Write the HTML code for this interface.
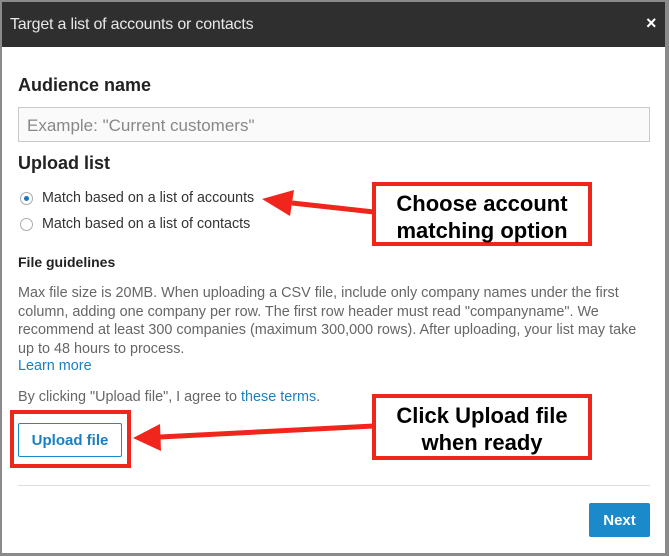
<!DOCTYPE html>
<html><head><meta charset="utf-8"><style>
*{margin:0;padding:0;box-sizing:border-box}
body{width:669px;height:556px;overflow:hidden;background:#8a8a8a;font-family:"Liberation Sans",sans-serif;position:relative}
.modal{position:absolute;left:2px;top:2px;width:663px;height:551px;background:#fff}
.hdr{position:absolute;left:0;top:0;width:663px;height:45px;background:#2f2f2f}
.t{position:absolute;white-space:nowrap}
.red{position:absolute;border:4px solid #f0261c;background:#fff}
.ann{position:absolute;font-weight:bold;font-size:22px;color:#000;text-align:center;line-height:27px;width:100%}
</style></head><body>
<div class="modal">
<div class="hdr"></div>
</div>
<div class="t" style="left:10px;top:16px;font-size:16px;color:#e8e8e8;letter-spacing:-0.2px">Target a list of accounts or contacts</div>
<div class="t" style="left:646px;top:13px;font-size:18px;color:#fff;font-weight:bold">×</div>
<div class="t" style="left:18px;top:75px;font-size:18px;font-weight:bold;color:#222">Audience name</div>
<div style="position:absolute;left:18px;top:107px;width:632px;height:35px;border:1px solid #c8c8c8;background:#fafafa"></div>
<div class="t" style="left:27px;top:116px;font-size:17px;color:#888">Example: "Current customers"</div>
<div class="t" style="left:18px;top:153px;font-size:18px;font-weight:bold;color:#222">Upload list</div>
<div style="position:absolute;left:20px;top:192px;width:13px;height:13px;border:1px solid #aaa;border-radius:50%;background:#fff"></div>
<div style="position:absolute;left:24px;top:196px;width:5px;height:5px;border-radius:50%;background:#1677c4"></div>
<div class="t" style="left:42px;top:190px;font-size:14.3px;color:#333">Match based on a list of accounts</div>
<div style="position:absolute;left:20px;top:218px;width:13px;height:13px;border:1px solid #aaa;border-radius:50%;background:#fff"></div>
<div class="t" style="left:42px;top:216px;font-size:14.3px;color:#333">Match based on a list of contacts</div>
<div class="t" style="left:18px;top:254px;font-size:14px;font-weight:bold;color:#222">File guidelines</div>
<div class="t" style="left:18px;top:284px;font-size:14.4px;line-height:18.5px;color:#666">Max file size is 20MB. When uploading a CSV file, include only company names under the first<br>column, adding one company per row. The first row header must read "companyname". We<br>recommend at least 300 companies (maximum 300,000 rows). After uploading, your list may take<br>up to 48 hours to process.</div>
<div class="t" style="left:18px;top:358px;font-size:14.4px;color:#1a7fc1">Learn more</div>
<div class="t" style="left:18px;top:389px;font-size:14.4px;color:#666">By clicking "Upload file", I agree to <span style="color:#1a7fc1">these terms</span>.</div>
<div style="position:absolute;left:10px;top:410px;width:121px;height:58px;border:4px solid #f0261c"></div>
<div style="position:absolute;left:18px;top:423px;width:104px;height:34px;border:1px solid #1a8acb;border-radius:2px;background:#fff"></div>
<div class="t" style="left:18px;top:432px;width:104px;text-align:center;font-size:15px;font-weight:bold;color:#1a7fc1">Upload file</div>
<div style="position:absolute;left:18px;top:485px;width:632px;height:1px;background:#ddd"></div>
<div style="position:absolute;left:589px;top:503px;width:61px;height:34px;background:#1a8acb;border-radius:2px"></div>
<div class="t" style="left:589px;top:512px;width:61px;text-align:center;font-size:15px;font-weight:bold;color:#fff">Next</div>
<svg style="position:absolute;left:0;top:0" width="669" height="556">
<line x1="374" y1="212" x2="292" y2="203" stroke="#f0261c" stroke-width="5"/>
<polygon points="262,199 294,190 290,216" fill="#f0261c"/>
<line x1="374" y1="426" x2="160" y2="437" stroke="#f0261c" stroke-width="5"/>
<polygon points="133,438 160,424 161,451" fill="#f0261c"/>
</svg>
<div class="red" style="left:372px;top:182px;width:220px;height:64px"><div class="ann" style="top:4px">Choose account<br>matching option</div></div>
<div class="red" style="left:372px;top:394px;width:220px;height:66px"><div class="ann" style="top:4px">Click Upload file<br>when ready</div></div>
</body></html>
